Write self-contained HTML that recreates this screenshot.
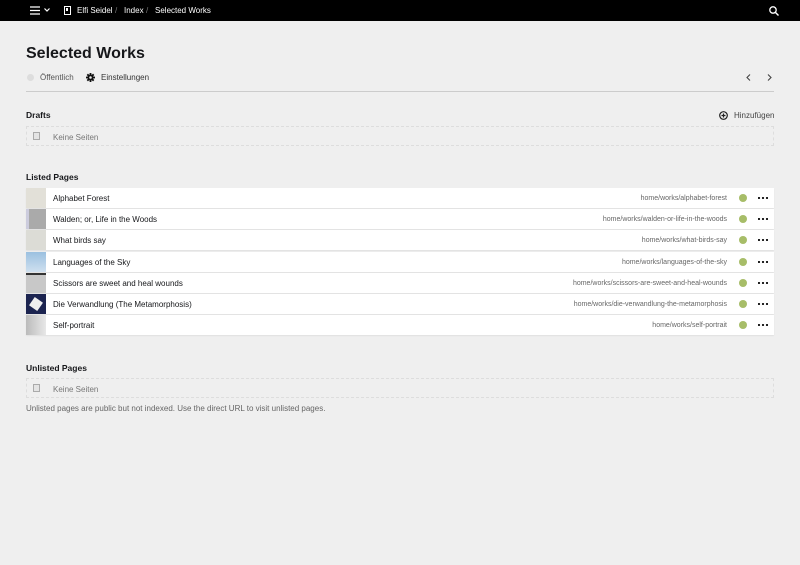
<!DOCTYPE html>
<html><head><meta charset="utf-8"><style>
*{margin:0;padding:0;box-sizing:border-box}
body{width:800px;height:565px;background:#efefef;font-family:"Liberation Sans",sans-serif;color:#16171a;position:relative;overflow:hidden;font-size:8px}
.a{position:absolute}
.top{left:0;top:0;width:800px;height:21px;background:#000;color:#fff;font-size:8px}
.top span{position:absolute;top:6px}
h1{position:absolute;left:26px;top:45px;font-size:16px;font-weight:bold}
.h2{font-size:8.5px;font-weight:bold}
.empty{left:26px;width:748px;height:20px;border:1px dashed #ddd;color:#777}
.row{left:26px;width:748px;height:20px;background:#fff;box-shadow:0 1px 1px rgba(0,0,0,.06)}
.row .t{position:absolute;left:27px;top:6px}
.row .u{position:absolute;right:47px;top:7px;font-size:7px;color:#666}
.row .d{position:absolute;right:27px;top:6px;width:8px;height:8px;border-radius:50%;background:#a7bd68}
.row .m{position:absolute;right:6px;top:9px;width:10px;height:2px}
.row .th{position:absolute;left:0;top:0;width:20px;height:20px}
</style></head><body>
<svg width="0" height="0" style="position:absolute"><defs><g id="dots"><circle cx="1" cy="1" r="1.1" fill="#111"/><circle cx="5" cy="1" r="1.1" fill="#111"/><circle cx="9" cy="1" r="1.1" fill="#111"/></g></defs></svg>
<div class="a top">
<svg class="a" style="left:30px;top:6px" width="10" height="9"><path d="M0 1h10M0 4.5h10M0 8h10" stroke="#fff" stroke-width="1.3"/></svg>
<svg class="a" style="left:44px;top:8px" width="6" height="4"><path d="M.5 .5l2.5 2.5 2.5-2.5" stroke="#fff" fill="none" stroke-width="1.2"/></svg>
<svg class="a" style="left:64px;top:6px" width="7" height="9"><rect x=".5" y=".5" width="6" height="8" fill="none" stroke="#fff"/><rect x="2" y="2" width="2" height="3" fill="#fff"/></svg>
<span style="left:77px">Elfi Seidel</span><span style="left:115px;color:#777">/</span>
<span style="left:124px">Index</span><span style="left:146px;color:#777">/</span>
<span style="left:155px">Selected Works</span>
<svg class="a" style="left:769px;top:6px" width="10" height="10"><circle cx="4" cy="4" r="3.2" fill="none" stroke="#fff" stroke-width="1.3"/><path d="M6.5 6.5L9.5 9.5" stroke="#fff" stroke-width="1.4"/></svg>
</div>
<h1>Selected Works</h1>
<div class="a" style="left:27px;top:74px;width:7px;height:7px;border-radius:50%;background:#ddd"></div>
<div class="a" style="left:40px;top:73px;color:#555">Öffentlich</div>
<svg class="a" style="left:86px;top:73px" width="9" height="9" viewBox="0 0 10 10"><g fill="#111"><circle cx="5" cy="5" r="3.3"/><rect x="4" y="0" width="2" height="10"/><rect x="0" y="4" width="10" height="2"/><rect x="4" y="0" width="2" height="10" transform="rotate(45 5 5)"/><rect x="4" y="0" width="2" height="10" transform="rotate(-45 5 5)"/></g><circle cx="5" cy="5" r="1.4" fill="#efefef"/></svg>
<div class="a" style="left:101px;top:73px;color:#333">Einstellungen</div>
<svg class="a" style="left:746px;top:74px" width="5" height="7"><path d="M4 .5L1 3.5 4 6.5" stroke="#444" fill="none" stroke-width="1.1"/></svg>
<svg class="a" style="left:767px;top:74px" width="5" height="7"><path d="M1 .5L4 3.5 1 6.5" stroke="#444" fill="none" stroke-width="1.1"/></svg>
<div class="a" style="left:26px;top:91px;width:748px;height:1px;background:#ccc"></div>
<div class="a h2" style="left:26px;top:110px">Drafts</div>
<svg class="a" style="left:719px;top:111px" width="9" height="9"><circle cx="4.5" cy="4.5" r="3.8" fill="none" stroke="#222" stroke-width="1.2"/><path d="M4.5 2.5v4M2.5 4.5h4" stroke="#222" stroke-width="1.2"/></svg>
<div class="a" style="left:734px;top:111px;color:#444">Hinzufügen</div>
<div class="a empty" style="top:126px"><span class="a" style="left:6px;top:5px;width:7px;height:8px;border:1px solid #aaa;background:#e4e4e4"></span><span class="a" style="left:26px;top:6px">Keine Seiten</span></div>
<div class="a h2" style="left:26px;top:172px">Listed Pages</div>

<div class="a row" style="top:188px"><div class="th" style="background:#e2e0d8"></div><span class="t">Alphabet Forest</span><span class="u">home/works/alphabet-forest</span><i class="d"></i><svg class="m"><use href="#dots"/></svg></div>
<div class="a row" style="top:209px"><div class="th" style="background:linear-gradient(90deg,#ccd 0 3px,#aaa 3px)"></div><span class="t">Walden; or, Life in the Woods</span><span class="u">home/works/walden-or-life-in-the-woods</span><i class="d"></i><svg class="m"><use href="#dots"/></svg></div>
<div class="a row" style="top:230px"><div class="th" style="background:#dcdcd6"></div><span class="t">What birds say</span><span class="u">home/works/what-birds-say</span><i class="d"></i><svg class="m"><use href="#dots"/></svg></div>
<div class="a row" style="top:252px"><div class="th" style="background:linear-gradient(#9bc0e0,#cfe0ef)"></div><span class="t">Languages of the Sky</span><span class="u">home/works/languages-of-the-sky</span><i class="d"></i><svg class="m"><use href="#dots"/></svg></div>
<div class="a row" style="top:273px"><div class="th" style="background:#c8c8c8;border-top:2px solid #333"></div><span class="t">Scissors are sweet and heal wounds</span><span class="u">home/works/scissors-are-sweet-and-heal-wounds</span><i class="d"></i><svg class="m"><use href="#dots"/></svg></div>
<div class="a row" style="top:294px"><div class="th" style="background:#1c2450"><div class="a" style="left:5px;top:5px;width:10px;height:10px;background:#eee;transform:rotate(35deg)"></div></div><span class="t">Die Verwandlung (The Metamorphosis)</span><span class="u">home/works/die-verwandlung-the-metamorphosis</span><i class="d"></i><svg class="m"><use href="#dots"/></svg></div>
<div class="a row" style="top:315px"><div class="th" style="background:linear-gradient(90deg,#bbb,#e8e8e8)"></div><span class="t">Self-portrait</span><span class="u">home/works/self-portrait</span><i class="d"></i><svg class="m"><use href="#dots"/></svg></div>

<div class="a h2" style="left:26px;top:363px">Unlisted Pages</div>
<div class="a empty" style="top:378px"><span class="a" style="left:6px;top:5px;width:7px;height:8px;border:1px solid #aaa;background:#e4e4e4"></span><span class="a" style="left:26px;top:6px">Keine Seiten</span></div>
<div class="a" style="left:26px;top:404px;color:#666">Unlisted pages are public but not indexed. Use the direct URL to visit unlisted pages.</div>
</body></html>
